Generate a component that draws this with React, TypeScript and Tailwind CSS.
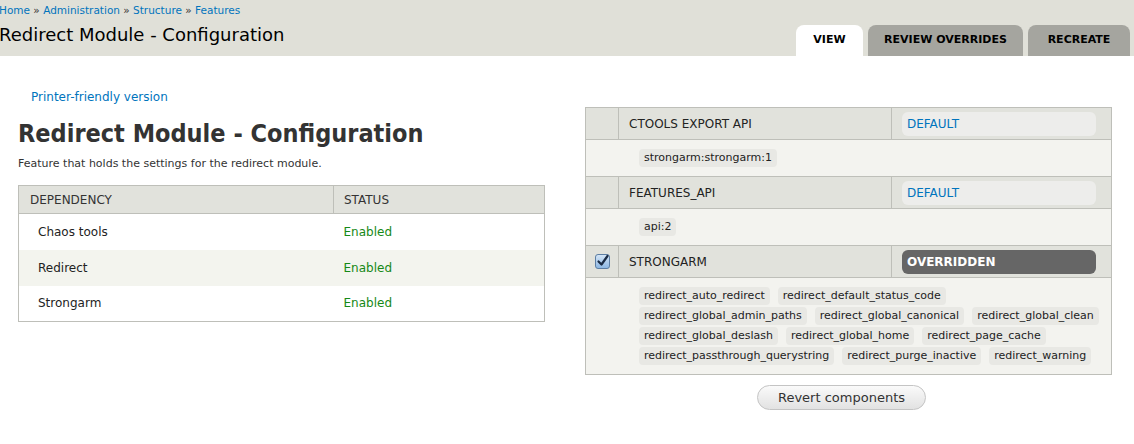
import React from 'react';

const font = { fontFamily: '"DejaVu Sans", "Lucida Grande", sans-serif' };
const condensed = { fontFamily: '"DejaVu Sans Condensed", "DejaVu Sans", sans-serif' };

const deps = [
  { name: 'Chaos tools', status: 'Enabled' },
  { name: 'Redirect', status: 'Enabled' },
  { name: 'Strongarm', status: 'Enabled' },
];

const components = [
  { name: 'CTOOLS EXPORT API', state: 'DEFAULT', checked: false, items: ['strongarm:strongarm:1'] },
  { name: 'FEATURES_API', state: 'DEFAULT', checked: false, items: ['api:2'] },
  {
    name: 'STRONGARM',
    state: 'OVERRIDDEN',
    checked: true,
    items: [
      'redirect_auto_redirect',
      'redirect_default_status_code',
      'redirect_global_admin_paths',
      'redirect_global_canonical',
      'redirect_global_clean',
      'redirect_global_deslash',
      'redirect_global_home',
      'redirect_page_cache',
      'redirect_passthrough_querystring',
      'redirect_purge_inactive',
      'redirect_warning',
    ],
  },
];

function Checkbox() {
  return (
    <svg width="15" height="15" viewBox="0 0 15 15">
      <defs>
        <linearGradient id="cb" x1="0" y1="0" x2="0" y2="1">
          <stop offset="0" stopColor="#d6e6f7" />
          <stop offset="1" stopColor="#8bb6e2" />
        </linearGradient>
      </defs>
      <rect x="0.5" y="0.5" width="14" height="14" rx="2.5" fill="url(#cb)" stroke="#5d7ea3" />
      <path d="M3.5 7.5 L6.5 10.5 L12.5 2" fill="none" stroke="#1b2c45" strokeWidth="2.2" strokeLinecap="round" strokeLinejoin="round" />
    </svg>
  );
}

export default function App() {
  return (
    <div className="w-[1134px] h-[444px] bg-white text-[#333] overflow-hidden" style={font}>
      {/* header band */}
      <div className="h-[56px] bg-[#e0e0d8] flex justify-between">
        <div className="-ml-[1px]">
          <div className="text-[10.5px] leading-[13px] pt-[4px] text-[#0074bd]">
            Home <span className="text-[#333]">»</span> Administration <span className="text-[#333]">»</span> Structure{' '}
            <span className="text-[#333]">»</span> Features
          </div>
          <h2 className="text-[18px] leading-[22px] mt-[7px] text-black">Redirect Module - Configuration</h2>
        </div>
        <div className="flex items-end gap-[5px] pr-[4px]">
          <div className="h-[31px] w-[67px] bg-white rounded-t-[8px] flex items-center justify-center text-[11px] font-bold text-black">
            VIEW
          </div>
          <div className="h-[31px] w-[155px] bg-[#a5a59f] rounded-t-[8px] flex items-center justify-center text-[11px] font-bold text-black">
            REVIEW OVERRIDES
          </div>
          <div className="h-[31px] w-[102px] bg-[#a5a59f] rounded-t-[8px] flex items-center justify-center text-[11px] font-bold text-black">
            RECREATE
          </div>
        </div>
      </div>

      {/* body */}
      <div className="flex gap-[40px] pl-[18px]">
        <div className="w-[527px]">
          <div className="pt-[34px] pl-[13px] text-[12px] leading-[14px] text-[#0074bd]">Printer-friendly version</div>
          <h1 className="mt-[15px] text-[25px] leading-[30px] font-bold text-[#333]" style={condensed}>
            Redirect Module - Configuration
          </h1>
          <p className="mt-[8px] text-[11px] leading-[14px] text-[#333]">Feature that holds the settings for the redirect module.</p>
          <table className="mt-[14px] w-full border border-[#bebfb9] border-collapse text-[12px]">
            <thead>
              <tr className="bg-[#e1e2dc] h-[28px]">
                <th className="w-[315px] text-left font-normal pl-[11px] border-r border-b border-[#bebfb9]">DEPENDENCY</th>
                <th className="text-left font-normal pl-[10px] border-b border-[#bebfb9]">STATUS</th>
              </tr>
            </thead>
            <tbody>
              {deps.map((d, i) => (
                <tr key={d.name} className={`h-[36px] ${i % 2 === 1 ? 'bg-[#f3f4ee]' : 'bg-white'}`}>
                  <td className="pl-[19px] text-[#222]">{d.name}</td>
                  <td className="pl-[10px] text-[#168916]">{d.status}</td>
                </tr>
              ))}
            </tbody>
          </table>
        </div>

        <div className="w-[527px] pt-[51px]">
          <div className="border border-[#bebfb9]">
            {components.map((c, i) => (
              <div key={c.name} className={i > 0 ? 'border-t border-[#bebfb9]' : ''}>
                <div className="flex h-[32px] bg-[#e1e2dc] border-b border-[#bebfb9]">
                  <div className="w-[33px] border-r border-[#bebfb9] flex items-center justify-center">
                    {c.checked && <Checkbox />}
                  </div>
                  <div className="w-[273px] border-r border-[#bebfb9] flex items-center pl-[10px] text-[12px] text-[#222]">
                    {c.name}
                  </div>
                  <div className="flex-1 flex items-center pl-[10px] pr-[15px]">
                    {c.checked ? (
                      <div className="w-full h-[24px] rounded-[6px] bg-[#666] text-white font-bold text-[12px] flex items-center pl-[5px]">
                        {c.state}
                      </div>
                    ) : (
                      <div className="w-full h-[24px] rounded-[6px] bg-[#ededeb] text-[#0074bd] text-[12px] flex items-center pl-[5px]">
                        {c.state}
                      </div>
                    )}
                  </div>
                </div>
                <div className="bg-[#f3f3ef] pl-[53px] pr-[6px] py-[9px] flex flex-wrap gap-x-[8px] gap-y-[2px]">
                  {c.items.map((it) => (
                    <span key={it} className="h-[18px] leading-[18px] px-[5px] rounded-[4px] bg-[#e8e8e4] text-[11px] text-[#222]">
                      {it}
                    </span>
                  ))}
                </div>
              </div>
            ))}
          </div>
          <div className="flex justify-center pr-[14px] mt-[10px]">
            <button className="h-[25px] px-[20px] rounded-full border border-[#c4c4c4] bg-gradient-to-b from-[#fafafa] to-[#e2e2e2] text-[13px] text-[#333]">
              Revert components
            </button>
          </div>
        </div>
      </div>
    </div>
  );
}
